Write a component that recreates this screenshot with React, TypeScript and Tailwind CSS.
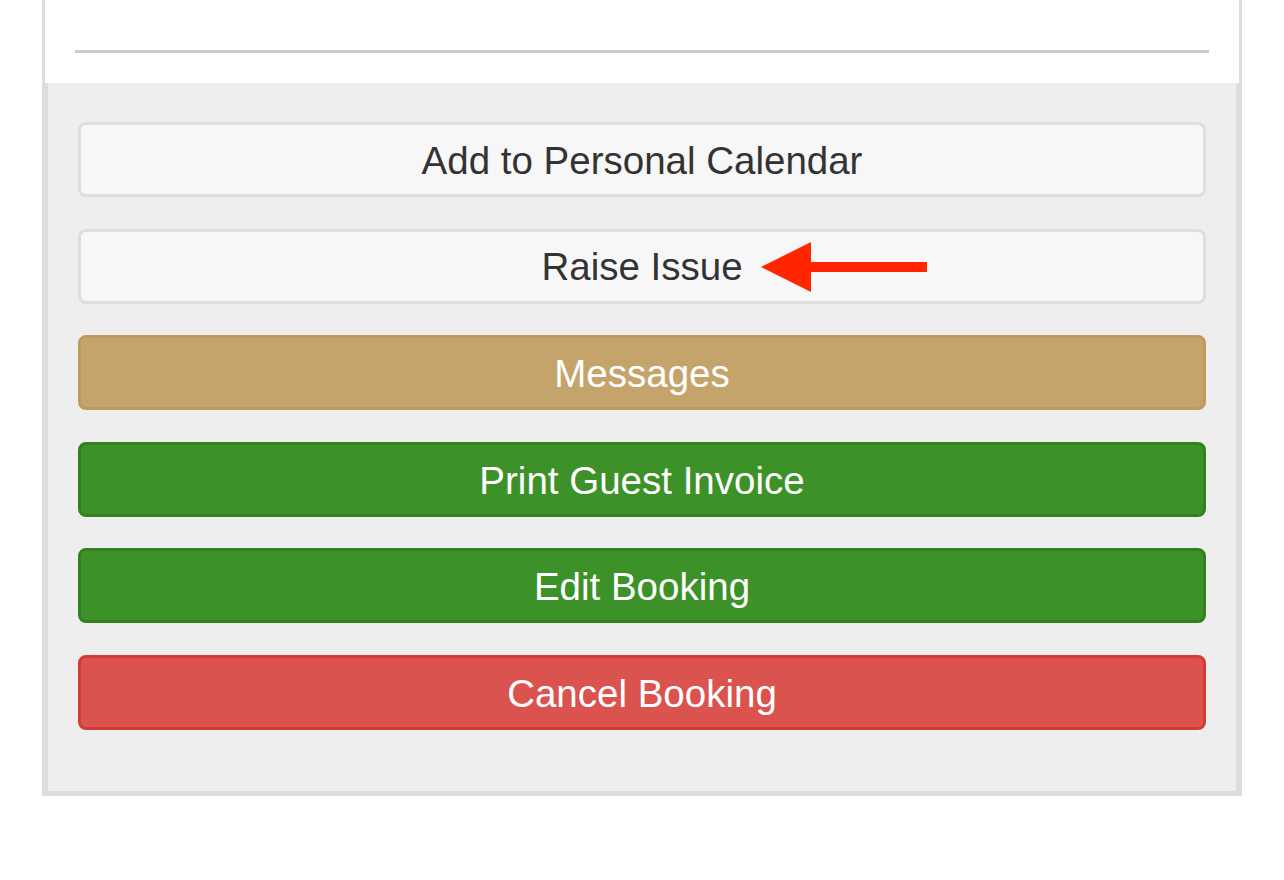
type Variant = 'default' | 'gold' | 'green' | 'red';

const variantClass: Record<Variant, string> = {
  default: 'bg-[#f7f7f7] border-[#dedede] text-[#333333]',
  gold: 'bg-[#c4a46a] border-[#bf9a58] text-white',
  green: 'bg-[#3c9228] border-[#33801f] text-white',
  red: 'bg-[#da534f] border-[#d43a36] text-white',
};

function ActionButton({
  label,
  variant = 'default',
  arrow = false,
}: {
  label: string;
  variant?: Variant;
  arrow?: boolean;
}) {
  return (
    <button
      className={`relative h-[75px] w-full rounded-[8px] border-[3px] pt-[3px] text-[38.5px] leading-none ${variantClass[variant]}`}
    >
      <span className="relative">
        {label}
        {arrow && (
          <svg
            className="absolute left-[calc(100%+18px)] top-1/2 -translate-y-1/2"
            width="167"
            height="50"
            viewBox="0 0 167 50"
          >
            <polygon points="0,25 50,0 50,50" fill="#ff2600" />
            <rect x="48" y="20" width="118" height="10" fill="#ff2600" />
          </svg>
        )}
      </span>
    </button>
  );
}

export default function App() {
  return (
    <div
      className="min-h-[880px] bg-white"
      style={{ fontFamily: '"Liberation Sans", Arial, sans-serif' }}
    >
      <div className="ml-[42px] w-[1200px]">
        <div className="border-x-[3px] border-[#dddddd] bg-white px-[30px] pt-[50px] pb-[30px]">
          <div className="h-[3px] bg-[#cccccc]" />
        </div>
        <div className="flex flex-col gap-[31.6px] border-x-[6px] border-b-[5px] border-[#dddddd] bg-[#eeeeee] px-[30px] pt-[39px] pb-[61px]">
          <ActionButton label="Add to Personal Calendar" />
          <ActionButton label="Raise Issue" arrow />
          <ActionButton label="Messages" variant="gold" />
          <ActionButton label="Print Guest Invoice" variant="green" />
          <ActionButton label="Edit Booking" variant="green" />
          <ActionButton label="Cancel Booking" variant="red" />
        </div>
      </div>
    </div>
  );
}
